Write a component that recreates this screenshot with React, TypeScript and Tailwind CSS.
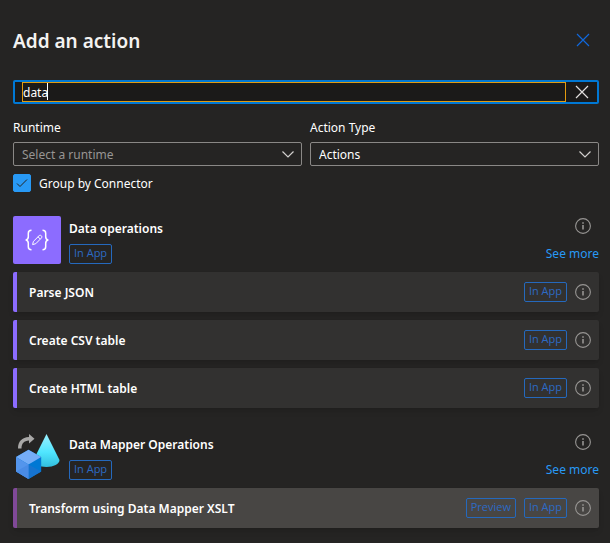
import React, { useState } from "react";

type Action = { name: string; tags: string[]; hovered?: boolean };

function InfoIcon() {
  return (
    <svg className="size-4" viewBox="0 0 16 16" fill="none" stroke="#979593" aria-hidden="true">
      <circle cx="8" cy="8" r="7.4" strokeWidth="1.1" />
      <path d="M8 7v4.5" strokeWidth="1.6" />
      <path d="M8 4.300v1.500" strokeWidth="1.6" />
    </svg>
  );
}

function InfoButton({ label }: { label: string }) {
  return (
    <button type="button" aria-label={label} className="block size-4 shrink-0">
      <InfoIcon />
    </button>
  );
}

function Tag({ children }: { children: React.ReactNode }) {
  return (
    <span className="flex h-5 items-start rounded-xs border border-[#2569bd] px-1 font-['Open_Sans',sans-serif] text-[11px] leading-4 font-medium text-[#2d6ac4]">
      {children}
    </span>
  );
}

function CloseIcon({ className }: { className: string }) {
  return (
    <svg className={className} viewBox="0 0 14 14" fill="none" stroke="currentColor" aria-hidden="true">
      <path d="M1 1l12 12M13 1L1 13" strokeWidth="1.2" />
    </svg>
  );
}

function Dropdown({ id, label, options, muted }: { id: string; label: string; options: string[]; muted?: boolean }) {
  return (
    <div className="min-w-0 flex-1">
      <label htmlFor={id} className="block h-6 leading-5">
        {label}
      </label>
      <div className="relative">
        <select
          id={id}
          className={`block h-6 w-full appearance-none rounded-xs border border-[#8a8886] bg-[#252423] px-2 pt-0.5 text-[12px] leading-4 outline-none ${
            muted ? "text-[#979593]" : "text-white"
          }`}
        >
          {options.map((option) => (
            <option key={option}>{option}</option>
          ))}
        </select>
        <svg
          className="pointer-events-none absolute top-2 right-2 h-2 w-3"
          viewBox="0 0 12 8"
          fill="none"
          stroke="#d2d0ce"
          aria-hidden="true"
        >
          <path d="M.5 1.500L6 7 11.500 1.500" strokeWidth="1.2" />
        </svg>
      </div>
    </div>
  );
}

function DataOperationsIcon() {
  return (
    <svg className="size-12 shrink-0 rounded-xs bg-[#8c6cff]" viewBox="0 0 48 48" fill="none" stroke="#fff" aria-hidden="true">
      <path
        d="M18.500 14.200c-2.500 0-3.200 1-3.200 3v3.600c0 1.800-.8 2.900-2.600 3.200 1.800.3 2.600 1.400 2.600 3.200v3.600c0 2 .7 3 3.200 3M29.500 14.200c2.500 0 3.200 1 3.200 3v3.600c0 1.800.8 2.900 2.600 3.200-1.800.3-2.600 1.400-2.600 3.200v3.600c0 2-.7 3-3.200 3"
        strokeWidth="1.5"
      />
      <path d="M19.600 28.600l.8-3.200 5.900-5.900c1.400-1 3.300.9 2.300 2.300l-5.800 5.900zM25 20.800l2.400 2.400" strokeWidth="1" />
    </svg>
  );
}

function DataMapperIcon() {
  return (
    <svg className="size-12 shrink-0" viewBox="0 0 48 48" aria-hidden="true">
      <defs>
        <linearGradient id="cone" x1="0" y1="0" x2="0" y2="1">
          <stop offset="0" stopColor="#9cf0ff" />
          <stop offset=".55" stopColor="#50e6ff" />
          <stop offset="1" stopColor="#32bedd" />
        </linearGradient>
      </defs>
      <path d="M33.500 2L20.500 28c0 4 6 7 13 7s13-3 13-7z" fill="url(#cone)" />
      <path d="M15.500 17.800l12.700 7.300v14.500L15.500 47 3 39.600V25.100z" fill="#0078d4" />
      <path d="M15.500 17.800l12.700 7.300-12.700 7.400L3 25.100z" fill="#75adf7" />
      <path d="M3 25.100l12.500 7.400V47L3 39.600z" fill="#5495ec" />
      <path d="M15.500 32.500L28.200 39.600 15.500 47z" fill="#1673cf" />
      <path d="M15.500 32.500V47L3 39.600z" fill="#4a8ce6" />
      <path d="M5 16.500C5 9.500 9 5.300 16 5V2l5.500 4.800-5.500 4.700V8.500c-5 .2-7.500 3-7.500 8z" fill="#a9a8a7" />
    </svg>
  );
}

function ActionCard({ action, accent }: { action: Action; accent: string }) {
  return (
    <li
      className={`flex h-10 items-center gap-2 rounded-xs border-l-4 pr-2 pl-3 shadow-md ${accent} ${
        action.hovered ? "bg-[#484644]" : "bg-[#323130]"
      }`}
    >
      <button type="button" className="flex-1 pt-0.5 text-left font-semibold">
        {action.name}
      </button>
      {action.tags.map((tag) => (
        <Tag key={tag}>{tag}</Tag>
      ))}
      <InfoButton label={`About ${action.name}`} />
    </li>
  );
}

function Connector({ name, icon, accent, actions }: { name: string; icon: React.ReactNode; accent: string; actions: Action[] }) {
  return (
    <section>
      <header className="flex h-12 gap-2">
        {icon}
        <div className="flex flex-1 flex-col items-start justify-between pt-1">
          <h2 className="leading-[18px] font-semibold">{name}</h2>
          <Tag>In App</Tag>
        </div>
        <div className="flex flex-col items-end justify-between pt-0.5 pb-0.5">
          <span className="pr-2">
            <InfoButton label={`About ${name}`} />
          </span>
          <a href="#more" className="leading-4 text-[#2899f5]">
            See more
          </a>
        </div>
      </header>
      <ul className="mt-2 flex flex-col gap-2">
        {actions.map((action) => (
          <ActionCard key={action.name} action={action} accent={accent} />
        ))}
      </ul>
    </section>
  );
}

export default function App() {
  const [query, setQuery] = useState("data");
  const [grouped, setGrouped] = useState(true);

  return (
    <main className="min-h-screen bg-[#252423] pt-7 pr-[11px] pb-3 pl-[13px] font-['Noto_Sans',sans-serif] text-[12px] text-white">
      <header className="flex h-6 items-center justify-between">
        <h1 className="pt-0.5 text-[19px] leading-6 font-semibold text-[#f3f2f1]">Add an action</h1>
        <button type="button" aria-label="Close" className="mr-[9px] text-[#1068dc]">
          <CloseIcon className="size-3.5" />
        </button>
      </header>

      <div className="relative mt-7 flex h-6 items-center rounded-xs border-2 border-[#0078d4] bg-[#1b1a19] pl-[7px]">
        <input
          type="text"
          aria-label="Search"
          value={query}
          onChange={(event) => setQuery(event.target.value)}
          className="h-5 min-w-0 flex-1 border border-[#e39b0f] text-[12px] leading-4 outline-none"
        />
        <span className="absolute top-px left-8 h-[17px] w-px bg-white" aria-hidden="true" />
        <button type="button" aria-label="Clear search" className="flex w-[31px] justify-center text-[#e1dfdd]">
          <CloseIcon className="size-3.5" />
        </button>
      </div>

      <div className="mt-3.5 flex gap-2">
        <Dropdown id="runtime" label="Runtime" options={["Select a runtime"]} muted />
        <Dropdown id="action-type" label="Action Type" options={["Actions"]} />
      </div>

      <div className="mt-2 flex h-[18px] items-center gap-2">
        <span className="relative size-[18px]">
          <input
            id="group"
            type="checkbox"
            checked={grouped}
            onChange={(event) => setGrouped(event.target.checked)}
            className="block size-[18px] appearance-none rounded-xs border border-[#2899f5] checked:bg-[#2899f5]"
          />
          {grouped && (
            <svg className="pointer-events-none absolute inset-0 size-[18px]" viewBox="0 0 18 18" fill="none" stroke="#252423" aria-hidden="true">
              <path d="M4 9.500l3 3L14 5.500" />
            </svg>
          )}
        </span>
        <label htmlFor="group" className="pt-0.5">
          Group by Connector
        </label>
      </div>

      <div className="mt-6 flex flex-col gap-6">
        <Connector
          name="Data operations"
          icon={<DataOperationsIcon />}
          accent="border-[#8c6cff]"
          actions={[
            { name: "Parse JSON", tags: ["In App"] },
            { name: "Create CSV table", tags: ["In App"] },
            { name: "Create HTML table", tags: ["In App"] },
          ]}
        />
        <Connector
          name="Data Mapper Operations"
          icon={<DataMapperIcon />}
          accent="border-[#804998]"
          actions={[{ name: "Transform using Data Mapper XSLT", tags: ["Preview", "In App"], hovered: true }]}
        />
      </div>
    </main>
  );
}
